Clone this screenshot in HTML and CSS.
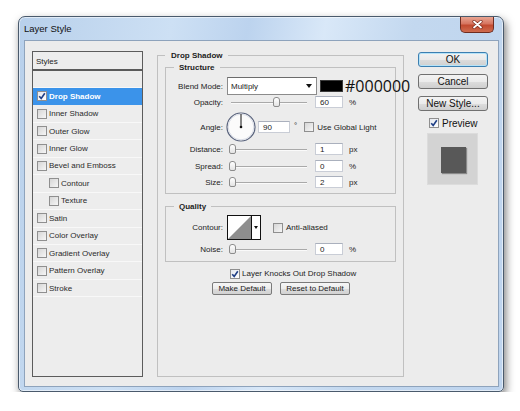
FILE: index.html
```html
<!DOCTYPE html>
<html lang="en">
<head>
    <meta charset="UTF-8">
    <title>Layer Style</title>
    <link rel="stylesheet" href="styles.css">
</head>
<body>
<div class="desk">
    <div class="window">
        <div class="titlebar">
            <span class="title">Layer Style</span>
            <div class="close">
                <svg width="13" height="9" viewBox="0 0 13 9">
                    <path d="M3 1.5 L10 7.5 M10 1.5 L3 7.5" stroke="#7a2a1c" stroke-width="3.2" stroke-linecap="round"/>
                    <path d="M3 1.5 L10 7.5 M10 1.5 L3 7.5" stroke="#ffffff" stroke-width="1.8" stroke-linecap="round"/>
                </svg>
            </div>
        </div>

        <div class="client">
            <!-- effect list -->
            <div class="styles-list">
                <div class="list-head">Styles</div>
                <div class="list-blank"></div>
                <div class="list-row selected"><span class="cb on"><svg width="8" height="8" viewBox="0 0 8 8"><path d="M1.2 4.2 L3.2 6.4 L6.8 1.2" fill="none" stroke="#1f3f86" stroke-width="1.6"/></svg></span>Drop Shadow</div>
                <div class="list-row"><span class="cb"></span>Inner Shadow</div>
                <div class="list-row"><span class="cb"></span>Outer Glow</div>
                <div class="list-row"><span class="cb"></span>Inner Glow</div>
                <div class="list-row"><span class="cb"></span>Bevel and Emboss</div>
                <div class="list-row sub"><span class="cb"></span>Contour</div>
                <div class="list-row sub"><span class="cb"></span>Texture</div>
                <div class="list-row"><span class="cb"></span>Satin</div>
                <div class="list-row"><span class="cb"></span>Color Overlay</div>
                <div class="list-row"><span class="cb"></span>Gradient Overlay</div>
                <div class="list-row"><span class="cb"></span>Pattern Overlay</div>
                <div class="list-row"><span class="cb"></span>Stroke</div>
            </div>

            <!-- settings -->
            <fieldset class="group main">
                <legend>Drop Shadow</legend>

                <fieldset class="group sub structure">
                    <legend>Structure</legend>
                    <div class="row blend">
                        <span class="lbl">Blend Mode:</span>
                        <div class="select">
                            <span>Multiply</span>
                            <span class="arrow"></span>
                        </div>
                        <span class="swatch"></span>
                        <span class="hex">#000000</span>
                    </div>
                    <div class="row line">
                        <span class="lbl">Opacity:</span>
                        <div class="slider"><span class="thumb" style="left: 44px"></span></div>
                        <span class="field">60</span>
                        <span class="unit">%</span>
                    </div>
                    <div class="row angle">
                        <span class="lbl">Angle:</span>
                        <svg class="dial" width="30" height="30" viewBox="0 0 30 30">
                            <circle cx="15" cy="15" r="14" fill="#fbfbfb" stroke="#56607a" stroke-width="1.2"/>
                            <circle cx="15" cy="15" r="12.8" fill="none" stroke="#d9dde6" stroke-width="1"/>
                            <path d="M15 15 L15 2" stroke="#111" stroke-width="1"/>
                            <circle cx="15" cy="15" r="1.3" fill="#111"/>
                        </svg>
                        <span class="field wide">90</span>
                        <span class="deg">°</span>
                        <span class="cb global"></span>
                        <span class="cb-text">Use Global Light</span>
                    </div>
                    <div class="row line distance">
                        <span class="lbl">Distance:</span>
                        <div class="slider"><span class="thumb" style="left: 0px"></span></div>
                        <span class="field">1</span>
                        <span class="unit">px</span>
                    </div>
                    <div class="row line spread">
                        <span class="lbl">Spread:</span>
                        <div class="slider"><span class="thumb" style="left: 0px"></span></div>
                        <span class="field">0</span>
                        <span class="unit">%</span>
                    </div>
                    <div class="row line size">
                        <span class="lbl">Size:</span>
                        <div class="slider"><span class="thumb" style="left: 0px"></span></div>
                        <span class="field">2</span>
                        <span class="unit">px</span>
                    </div>
                </fieldset>

                <fieldset class="group sub quality">
                    <legend>Quality</legend>
                    <div class="row contour-row">
                        <span class="lbl">Contour:</span>
                        <div class="contour">
                            <svg width="23" height="23" viewBox="0 0 23 23">
                                <rect width="23" height="23" fill="#fff"/>
                                <polygon points="0,23 23,0 23,23" fill="#8e8e8e"/>
                            </svg>
                            <span class="c-arrow"></span>
                        </div>
                        <span class="cb anti"></span>
                        <span class="cb-text">Anti-aliased</span>
                    </div>
                    <div class="row line noise">
                        <span class="lbl">Noise:</span>
                        <div class="slider"><span class="thumb" style="left: 0px"></span></div>
                        <span class="field">0</span>
                        <span class="unit">%</span>
                    </div>
                </fieldset>

                <div class="knock">
                    <span class="cb on"><svg width="8" height="8" viewBox="0 0 8 8"><path d="M1.2 4.2 L3.2 6.4 L6.8 1.2" fill="none" stroke="#1f3f86" stroke-width="1.6"/></svg></span>
                    <span class="cb-text">Layer Knocks Out Drop Shadow</span>
                </div>
                <div class="defaults">
                    <button class="small-btn make">Make Default</button>
                    <button class="small-btn reset">Reset to Default</button>
                </div>
            </fieldset>

            <!-- buttons -->
            <div class="side">
                <button class="btn default">OK</button>
                <button class="btn">Cancel</button>
                <button class="btn">New Style...</button>
                <div class="preview-check">
                    <span class="cb on"><svg width="8" height="8" viewBox="0 0 8 8"><path d="M1.2 4.2 L3.2 6.4 L6.8 1.2" fill="none" stroke="#1f3f86" stroke-width="1.6"/></svg></span>
                    <span>Preview</span>
                </div>
                <div class="preview">
                    <div class="preview-square"></div>
                </div>
            </div>
        </div>
    </div>
</div>
</body>
</html>
```

FILE: styles.css
```css
/* reset */
* {
    margin: 0;
    padding: 0;
    box-sizing: border-box;
}
body {
    background: #ffffff;
    font-family: "Liberation Sans", Arial, sans-serif;
    font-size: 8px;
    color: #232323;
}
.desk {
    padding: 16px 0 0 18px;
}

/* window frame */
.window {
    width: 486px;
    height: 376px;
    display: flex;
    flex-direction: column;
    padding: 0 4px 4px 5px;
    border: 1px solid #4a5a6c;
    border-radius: 7px 7px 5px 5px;
    background: linear-gradient(100deg, #b8d0eb 0%, #cde0f4 28%, #bcd3ee 42%, #d9e8f8 56%, #c3d8ef 72%, #bed4ee 100%);
    box-shadow: 2px 4px 9px rgba(0, 0, 0, .5), inset 0 0 0 1px rgba(255, 255, 255, .55);
}
.titlebar {
    height: 23px;
    display: flex;
    justify-content: space-between;
    align-items: flex-start;
}
.title {
    padding-top: 6px;
    font-size: 9.5px;
    color: #111;
}
.close {
    width: 34px;
    height: 16px;
    margin-right: 5px;
    display: flex;
    align-items: center;
    justify-content: center;
    border: 1px solid #6e2c20;
    border-top: none;
    border-radius: 0 0 5px 5px;
    background: linear-gradient(#e9a592, #d67560 45%, #c24a30 55%, #cf6c4f);
}

.client {
    flex: 1;
    display: flex;
    padding: 10px 8px 9px 7px;
    border: 1px solid #8ea3bc;
    background: #ececec;
}

/* styles list */
.styles-list {
    width: 111px;
    border: 1px solid #5c5c5c;
    background: #ededed;
}
.list-head {
    height: 19px;
    padding: 5px 0 0 3px;
    border-bottom: 2px solid #5a5a5a;
}
.list-blank {
    height: 17px;
    border-bottom: 1px solid #f8f8f8;
}
.list-row {
    height: 17.45px;
    display: flex;
    align-items: center;
    padding-left: 4px;
    border-bottom: 1px solid #f8f8f8;
    color: #2a2a2a;
}
.list-row .cb {
    margin-right: 2px;
}
.list-row.sub {
    padding-left: 16px;
}
.list-row.selected {
    background: #3b93ea;
    border-bottom-color: #3b93ea;
    color: #fff;
    font-weight: bold;
}

/* checkbox */
.cb {
    flex: none;
    width: 10px;
    height: 10px;
    display: flex;
    align-items: center;
    justify-content: center;
    border: 1px solid #8f8f8f;
    background: linear-gradient(135deg, #d6d6d6, #f6f6f6);
}
.cb.on {
    background: linear-gradient(135deg, #e4e8ef, #ffffff);
}
.cb-text {
    margin-left: 3px;
}

/* group boxes */
.group {
    min-width: 0;
    border: 1px solid #c0c0c0;
}
.group legend {
    line-height: 9px;
    font-weight: bold;
    color: #1c1c1c;
}
.main {
    width: 247px;
    margin-left: 14px;
    padding: 0 7px;
}
.main > legend {
    padding: 0 5px 0 6px;
}
.sub > legend {
    margin-left: 8px;
    padding: 0 5px;
}
.structure {
    margin-top: 3px;
    padding: 5px 0 5px 0;
}
.quality {
    margin-top: 8px;
    padding: 4px 0 6px 0;
}

/* rows */
.row {
    display: flex;
    align-items: center;
}
.row > * {
    flex: none;
}
.lbl {
    width: 57px;
    text-align: right;
}
.blend {
    height: 18px;
}
.select {
    width: 90px;
    height: 18px;
    margin-left: 4px;
    display: flex;
    align-items: center;
    justify-content: space-between;
    padding: 0 4px 0 3px;
    border: 1px solid #8b8b8b;
    border-top-color: #6c6c6c;
    background: #fff;
}
.arrow {
    width: 0;
    height: 0;
    border-style: solid;
    border-width: 4px 3.5px 0 3.5px;
    border-color: #111 transparent transparent transparent;
}
.swatch {
    width: 23px;
    height: 12px;
    margin-left: 3px;
    background: #000;
    border: 1px solid #3a3a3a;
}
.hex {
    margin-left: 2px;
    font-family: "Open Sans", sans-serif;
    font-size: 16px;
    line-height: 12px;
    color: #111;
}
.line {
    height: 12px;
    margin-top: 1px;
}
.spread {
    margin-top: 5px;
}
.size {
    margin-top: 4px;
}
.noise {
    margin-top: 3px;
}
.slider {
    position: relative;
    width: 78px;
    height: 12px;
    margin-left: 6px;
}
.slider::before {
    content: '';
    position: absolute;
    left: 2px;
    right: 0;
    top: 6px;
    height: 1px;
    background: #a9a9a9;
    box-shadow: 0 1px 0 #fafafa;
}
.thumb {
    position: absolute;
    top: 1px;
    width: 7px;
    height: 10px;
    border: 1px solid #8c8c8c;
    border-radius: 3px 3px 2px 2px;
    background: linear-gradient(#ffffff, #e3e3e3);
}
.field {
    width: 28px;
    height: 12px;
    margin-left: 8px;
    padding: 1px 0 0 4px;
    line-height: 10px;
    border: 1px solid #c9cdd6;
    border-top-color: #aab0bd;
    background: #fff;
}
.field.wide {
    width: 32px;
    margin-left: 2px;
}
.unit {
    margin-left: 6px;
}
.angle {
    height: 30px;
    margin-top: 4px;
}
.dial {
    margin-left: 3px;
}
.deg {
    margin-left: 4px;
    margin-top: -4px;
}
.cb.global {
    margin-left: 7px;
}
.contour-row {
    height: 25px;
}
.contour {
    height: 25px;
    margin-left: 4px;
    display: flex;
    border: 1px solid #111;
    background: #fff;
}
.c-arrow {
    width: 9px;
    border-left: 1px solid #111;
    display: flex;
    align-items: center;
    justify-content: center;
}
.c-arrow::after {
    content: '';
    border-style: solid;
    border-width: 3px 2.5px 0 2.5px;
    border-color: #111 transparent transparent transparent;
}
.cb.anti {
    margin-left: 12px;
}

.knock {
    display: flex;
    align-items: center;
    height: 11px;
    margin-top: 6px;
    padding-left: 65px;
}
.knock .cb-text {
    margin-left: 2px;
}
.defaults {
    display: flex;
    gap: 8px;
    margin-top: 3px;
    padding-left: 47px;
}
.small-btn {
    height: 13px;
    font-family: "Liberation Sans", Arial, sans-serif;
    font-size: 8px;
    color: #1a1a1a;
    border: 1px solid #7a7a7a;
    border-radius: 2px;
    background: linear-gradient(#f6f6f6, #ececec 50%, #dddddd 51%, #d2d2d2);
}
.make {
    width: 60px;
}
.reset {
    width: 70px;
}

/* right column */
.side {
    width: 70px;
    margin-left: 14px;
    padding-top: 1px;
    display: flex;
    flex-direction: column;
    gap: 7px;
}
.btn {
    height: 15px;
    font-family: "Liberation Sans", Arial, sans-serif;
    font-size: 10px;
    color: #111;
    border: 1px solid #707070;
    border-radius: 3px;
    background: linear-gradient(#f3f3f3, #ebebeb 50%, #dddddd 51%, #cfcfcf);
}
.btn.default {
    border-color: #3c7fb1;
    box-shadow: inset 0 0 0 1px #b6e3f8;
    background: linear-gradient(#f2f2f2, #eaeaea 50%, #dcdcdc 51%, #d0d0d0);
}
.preview-check {
    display: flex;
    align-items: center;
    height: 10px;
    padding-left: 11px;
    font-size: 10px;
    color: #111;
}
.preview-check span + span {
    margin-left: 3px;
}
.preview {
    width: 51px;
    height: 52px;
    margin: -2px 0 0 9px;
    display: flex;
    align-items: center;
    justify-content: center;
    padding: 2px 0 0 1px;
    background: #d3d3d3;
    border: 1px solid #dcdcdc;
}
.preview-square {
    width: 25px;
    height: 26px;
    background: #585858;
    box-shadow: 1px 1px 1px rgba(0, 0, 0, .35);
}
```
